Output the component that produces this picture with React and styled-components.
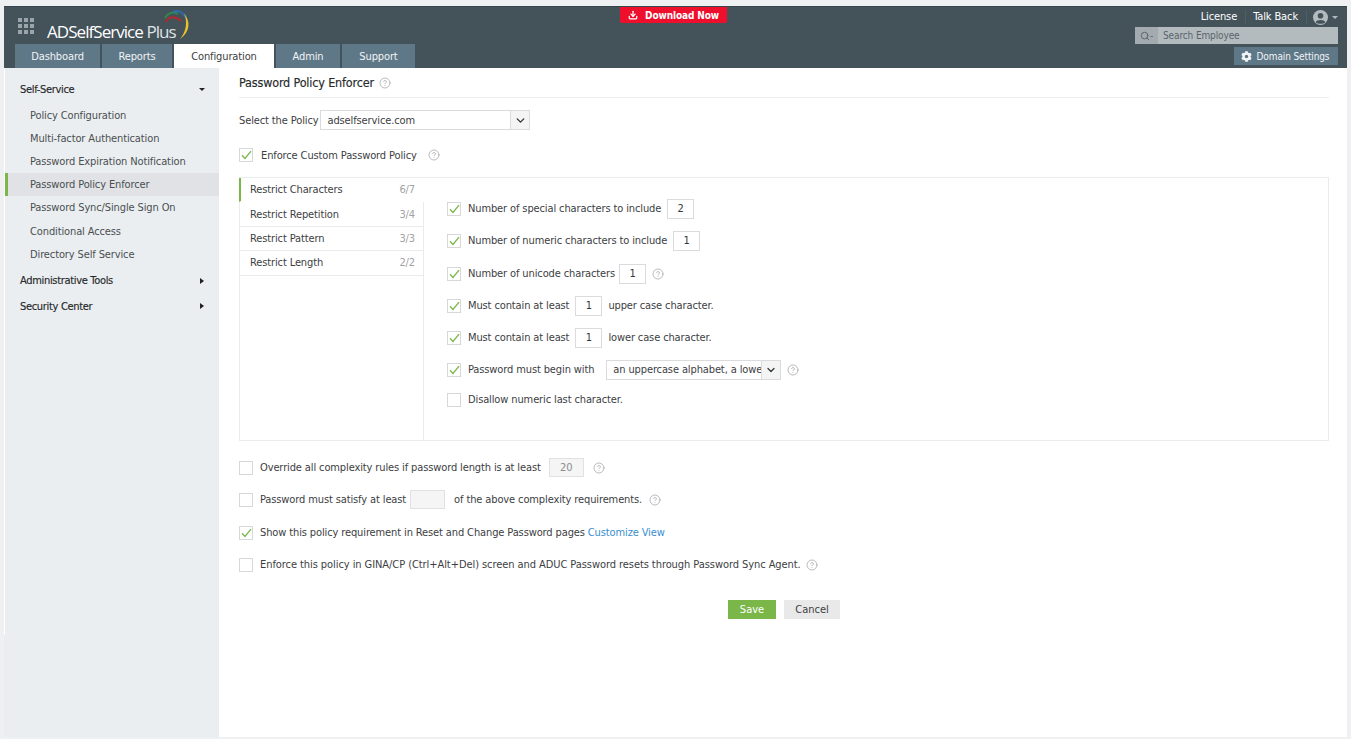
import React from "react";
import styled, { createGlobalStyle } from "styled-components";
import { ChevronDown, Download, CircleHelp, Search } from "lucide-react";
import { FaCog } from "react-icons/fa";

const GlobalStyle = createGlobalStyle`
  html, body {
    margin: 0;
    padding: 0;
    background: #eef0f2;
  }
  body {
    font-family: "DejaVu Sans Condensed", "DejaVu Sans", Tahoma, sans-serif;
    font-stretch: condensed;
    font-size: 11px;
    letter-spacing: -0.12px;
    color: #3c4043;
  }
  * {
    box-sizing: border-box;
  }
`;

const tabs = ["Dashboard", "Reports", "Configuration", "Admin", "Support"];
const tabWidths = [85, 70, 100, 64, 73];

const menu = [
  "Policy Configuration",
  "Multi-factor Authentication",
  "Password Expiration Notification",
  "Password Policy Enforcer",
  "Password Sync/Single Sign On",
  "Conditional Access",
  "Directory Self Service",
];

const sideTabs = [
  ["Restrict Characters", "6/7"],
  ["Restrict Repetition", "3/4"],
  ["Restrict Pattern", "3/3"],
  ["Restrict Length", "2/2"],
];

const Help = ({ left = 0 }) => (
  <HelpIcon $left={left}>
    <CircleHelp size={12} strokeWidth={1.4} />
  </HelpIcon>
);

const Check = ({ checked }) => (
  <CheckBox>
    {checked && (
      <svg width="11" height="10" viewBox="0 0 11 10">
        <path d="M1 5.2 L4 8.4 L10 1.2" fill="none" stroke="#7ab648" strokeWidth="1.3" />
      </svg>
    )}
  </CheckBox>
);

const App = () => {
  return (
    <Frame>
      <GlobalStyle />
      <Shell>
        <Header>
          <HeaderLeft>
            <LogoRow>
              <Dots>
                {Array.from({ length: 9 }).map((_, i) => (
                  <i key={i} />
                ))}
              </Dots>
              <LogoText>
                ADSelfService <span>Plus</span>
              </LogoText>
              <LogoMark width="32" height="34" viewBox="0 0 32 34">
                <path d="M5.5 14 C8 9 14 7 21 13" fill="none" stroke="#b5282e" strokeWidth="2" />
                <path d="M5 10 C8 5 13 3 18 6" fill="none" stroke="#2e8b4f" strokeWidth="2" />
                <path d="M13 4 C17 2 22 3 26 10" fill="none" stroke="#2a6db0" strokeWidth="2" />
                <path d="M24 5 C31 14 30 24 20 31 C26 24 28 14 24 5 Z" fill="#e8c22a" />
              </LogoMark>
            </LogoRow>
            <TabBar>
              {tabs.map((t, i) => (
                <Tab key={t} $active={t === "Configuration"} $width={tabWidths[i]}>
                  {t}
                </Tab>
              ))}
            </TabBar>
          </HeaderLeft>
          <DownloadSlot>
            <DownloadButton>
              <Download size={10} strokeWidth={3} />
              Download Now
            </DownloadButton>
          </DownloadSlot>
          <HeaderRight>
            <TopLinks>
              <TopLink>License</TopLink>
              <TopLink>Talk Back</TopLink>
              <UserIcon>
                <svg width="15" height="15" viewBox="0 0 15 15">
                  <circle cx="7.5" cy="7.5" r="7.5" fill="#b4bbbf" />
                  <circle cx="7.5" cy="5.8" r="2.8" fill="#44525a" />
                  <path d="M2.6 12.2 C4 9.4 11 9.4 12.4 12.2 C10 14.4 5 14.4 2.6 12.2 Z" fill="#44525a" />
                </svg>
                <Caret $color="#b4bbbf" />
              </UserIcon>
            </TopLinks>
            <SearchBox>
              <SearchAddon>
                <Search size={10} strokeWidth={2.4} />
                <span>-</span>
              </SearchAddon>
              <SearchText>Search Employee</SearchText>
            </SearchBox>
            <DomainButton>
              <FaCog size={11} />
              Domain Settings
            </DomainButton>
          </HeaderRight>
        </Header>
        <Body>
          <Sidebar>
            <SideHead>
              Self-Service
              <Caret $color="#222" />
            </SideHead>
            <SideList>
              {menu.map((m) => (
                <SideItem key={m} $active={m === "Password Policy Enforcer"}>
                  {m}
                </SideItem>
              ))}
            </SideList>
            <SideHead>
              Administrative Tools
              <CaretRight />
            </SideHead>
            <SideHead>
              Security Center
              <CaretRight />
            </SideHead>
          </Sidebar>
          <Content>
            <Title>
              Password Policy Enforcer
              <Help left={5} />
            </Title>
            <PolicyRow>
              Select the Policy
              <PolicySelect>
                <span>adselfservice.com</span>
                <SelectArrow>
                  <ChevronDown size={13} strokeWidth={2.6} />
                </SelectArrow>
              </PolicySelect>
            </PolicyRow>
            <EnforceRow>
              <Check checked />
              Enforce Custom Password Policy
              <Help left={3} />
            </EnforceRow>
            <Panel>
              <PanelTabs>
                {sideTabs.map(([name, count], i) => (
                  <PanelTab key={name} $active={i === 0}>
                    {name}
                    <Count>{count}</Count>
                  </PanelTab>
                ))}
              </PanelTabs>
              <Rules>
                <Rule>
                  <Check checked />
                  Number of special characters to include
                  <ValueBox>2</ValueBox>
                </Rule>
                <Rule>
                  <Check checked />
                  Number of numeric characters to include
                  <ValueBox>1</ValueBox>
                </Rule>
                <Rule>
                  <Check checked />
                  Number of unicode characters
                  <ValueBox $left={-2}>1</ValueBox>
                  <Help />
                </Rule>
                <Rule>
                  <Check checked />
                  Must contain at least
                  <ValueBox>1</ValueBox>
                  upper case character.
                </Rule>
                <Rule>
                  <Check checked />
                  Must contain at least
                  <ValueBox>1</ValueBox>
                  lower case character.
                </Rule>
                <Rule $height={30}>
                  <Check checked />
                  Password must begin with
                  <BeginSelect>
                    <span>an uppercase alphabet, a lowercase alphabet</span>
                    <SelectArrow>
                      <ChevronDown size={12} strokeWidth={2.6} />
                    </SelectArrow>
                  </BeginSelect>
                  <Help />
                </Rule>
                <Rule>
                  <Check />
                  Disallow numeric last character.
                </Rule>
              </Rules>
            </Panel>
            <Options>
              <Rule>
                <Check />
                Override all complexity rules if password length is at least
                <DisabledBox $left={2}>20</DisabledBox>
                <Help left={3} />
              </Rule>
              <Rule>
                <Check />
                Password must satisfy at least
                <DisabledBox $left={-2} $right={3} />
                of the above complexity requirements.
                <Help left={1} />
              </Rule>
              <Rule>
                <Check checked />
                Show this policy requirement in Reset and Change Password pages
                <LinkText>Customize View</LinkText>
              </Rule>
              <Rule $tracking={-0.07}>
                <Check />
                Enforce this policy in GINA/CP (Ctrl+Alt+Del) screen and ADUC Password resets through Password Sync Agent.
                <Help left={-1} />
              </Rule>
            </Options>
            <Actions>
              <SaveButton>Save</SaveButton>
              <CancelButton>Cancel</CancelButton>
            </Actions>
          </Content>
        </Body>
      </Shell>
    </Frame>
  );
};

const Frame = styled.div`
  height: 739px;
  padding: 6px 4px 2px;
  overflow: hidden;
`;

const Shell = styled.div`
  height: 100%;
  display: flex;
  flex-direction: column;
  background: #fff;
`;

const Header = styled.header`
  height: 62px;
  flex: none;
  background: #44525a;
  border-top: 1px solid #39454c;
  display: grid;
  grid-template-columns: 1fr auto 1fr;
  padding: 0 9px 0 11px;
`;

const HeaderLeft = styled.div`
  display: flex;
  flex-direction: column;
  justify-content: space-between;
`;

const LogoRow = styled.div`
  position: relative;
  display: flex;
  align-items: flex-start;
  padding: 5px 0 0 3px;
  color: #fff;
`;

const LogoMark = styled.svg`
  position: absolute;
  left: 145px;
  top: 1px;
`;

const Dots = styled.div`
  display: grid;
  grid-template-columns: repeat(3, 4px);
  grid-auto-rows: 4px;
  gap: 2px;
  margin: 6px 13px 0 0;
  i {
    background: #9aa5ab;
  }
`;

const LogoText = styled.div`
  font-family: "Open Sans", sans-serif;
  font-stretch: normal;
  font-size: 17px;
  letter-spacing: -0.95px;
  margin-top: 8px;
  white-space: nowrap;
  span {
    color: #dfe3e5;
  }
`;

const TabBar = styled.nav`
  display: flex;
  gap: 2px;
`;

const Tab = styled.a`
  width: ${(p) => p.$width}px;
  height: 24px;
  display: flex;
  align-items: center;
  justify-content: center;
  background: ${(p) => (p.$active ? "#fff" : "#5f7888")};
  color: ${(p) => (p.$active ? "#3c4043" : "#f2f4f5")};
`;

const DownloadSlot = styled.div`
  padding-right: 6px;
`;

const DownloadButton = styled.a`
  width: 107px;
  height: 16px;
  display: flex;
  align-items: center;
  justify-content: center;
  gap: 7px;
  background: #ee0f2d;
  color: #fff;
  font-size: 10px;
  font-weight: bold;
  border-radius: 0 0 2px 2px;
`;

const HeaderRight = styled.div`
  display: flex;
  flex-direction: column;
  align-items: flex-end;
`;

const TopLinks = styled.div`
  display: flex;
  align-items: center;
  height: 20px;
  color: #fff;
`;

const TopLink = styled.a`
  padding: 0 7.5px;
  border-right: 1px solid #4f5e66;
  line-height: 14px;
`;

const UserIcon = styled.div`
  display: flex;
  align-items: center;
  gap: 4px;
  padding-left: 6.5px;
`;

const SearchBox = styled.div`
  width: 203px;
  height: 17px;
  display: flex;
  background: #b4bbbf;
  color: #59646a;
  font-size: 10px;
`;

const SearchAddon = styled.div`
  width: 23px;
  display: flex;
  align-items: center;
  justify-content: center;
  background: #a3abb0;
  color: #5d686e;
`;

const SearchText = styled.span`
  padding-left: 5px;
  line-height: 17px;
`;

const DomainButton = styled.a`
  width: 104px;
  height: 18px;
  margin-top: 3px;
  display: flex;
  align-items: center;
  justify-content: center;
  gap: 5px;
  padding-right: 2px;
  background: #5f7888;
  color: #f2f4f5;
  font-size: 10px;
`;

const Body = styled.div`
  flex: 1;
  display: flex;
  min-height: 0;
`;

const Sidebar = styled.aside`
  position: relative;
  width: 215px;
  flex: none;
  padding: 9px 0 0 1px;
  background: #ebeef0;
  &::before {
    content: "";
    position: absolute;
    left: 0;
    top: 0;
    width: 1px;
    height: 567px;
    background: #fff;
  }
`;

const SideHead = styled.div`
  height: 25.5px;
  padding: 0 14px 0 15px;
  display: flex;
  align-items: center;
  justify-content: space-between;
  color: #26292b;
  letter-spacing: -0.32px;
  -webkit-text-stroke: 0.15px #26292b;
`;

const SideList = styled.ul`
  list-style: none;
  margin: 1px 0 2px;
  padding: 0;
`;

const SideItem = styled.li`
  height: 23.2px;
  padding-left: 22px;
  display: flex;
  align-items: center;
  color: #4a4f52;
  background: ${(p) => (p.$active ? "#e0e2e5" : "transparent")};
  border-left: 3px solid ${(p) => (p.$active ? "#7ab648" : "transparent")};
`;

const Caret = styled.span`
  width: 0;
  height: 0;
  border-left: 3px solid transparent;
  border-right: 3px solid transparent;
  border-top: 3px solid ${(p) => p.$color};
`;

const CaretRight = styled.span`
  width: 0;
  height: 0;
  margin-right: 1px;
  border-top: 3px solid transparent;
  border-bottom: 3px solid transparent;
  border-left: 4px solid #222;
`;

const Content = styled.main`
  flex: 1;
  padding: 0 18px 0 20px;
`;

const Title = styled.h1`
  margin: 0;
  height: 30px;
  padding-top: 7px;
  border-bottom: 1px solid #eceeef;
  display: flex;
  align-items: flex-start;
  font-size: 12.5px;
  font-weight: normal;
  letter-spacing: -0.17px;
  color: #26292b;
  -webkit-text-stroke: 0.15px #26292b;
`;

const HelpIcon = styled.span`
  display: inline-flex;
  margin-left: ${(p) => p.$left}px;
  color: #9a9ea1;
  -webkit-text-stroke: 0;
  h1 > & {
    margin-top: 2px;
  }
`;

const PolicyRow = styled.div`
  margin-top: 12px;
  height: 20px;
  display: flex;
  align-items: center;
  gap: 2px;
`;

const PolicySelect = styled.div`
  width: 210px;
  height: 20px;
  display: flex;
  align-items: stretch;
  justify-content: space-between;
  border: 1px solid #d9dbdc;
  span {
    padding-left: 6px;
    line-height: 19px;
  }
`;

const SelectArrow = styled.div`
  width: 19px;
  flex: none;
  display: flex;
  align-items: center;
  justify-content: center;
  background: #f4f4f4;
  border-left: 1px solid #d9dbdc;
  color: #33383b;
`;

const EnforceRow = styled.div`
  margin-top: 18px;
  height: 14px;
  display: flex;
  align-items: center;
  gap: 8px;
`;

const CheckBox = styled.span`
  width: 14px;
  height: 14px;
  flex: none;
  display: inline-flex;
  align-items: center;
  justify-content: center;
  border: 1px solid #d5d7d8;
  background: #fff;
`;

const Panel = styled.section`
  margin-top: 15px;
  height: 264px;
  display: flex;
  border: 1px solid #eaebec;
`;

const PanelTabs = styled.div`
  width: 184px;
  flex: none;
  border-right: 1px solid #eaebec;
`;

const PanelTab = styled.div`
  position: relative;
  height: 24.4px;
  margin-left: ${(p) => (p.$active ? "-1px" : "0")};
  margin-right: ${(p) => (p.$active ? "-1px" : "0")};
  padding: 0 ${(p) => (p.$active ? 9 : 8)}px 0 ${(p) => (p.$active ? 9 : 10)}px;
  display: flex;
  align-items: center;
  justify-content: space-between;
  color: #3c4043;
  background: #fff;
  border-left: ${(p) => (p.$active ? "2px solid #7ab648" : "none")};
  border-bottom: 1px solid ${(p) => (p.$active ? "transparent" : "#eaebec")};
`;

const Count = styled.span`
  color: #a0a3a5;
`;

const Rules = styled.div`
  flex: 1;
  padding: 21px 0 0 23px;
`;

const Rule = styled.div`
  height: ${(p) => p.$height || 32.3}px;
  display: flex;
  align-items: flex-start;
  gap: 6px;
  line-height: 20px;
  letter-spacing: ${(p) => p.$tracking ?? -0.12}px;
  & > ${CheckBox} {
    margin: 3px 1px 0 0;
  }
  & > ${HelpIcon} {
    margin-top: 4px;
  }
`;

const ValueBox = styled.span`
  width: 27px;
  height: 20px;
  margin-left: ${(p) => p.$left || 0}px;
  display: inline-flex;
  align-items: center;
  justify-content: center;
  border: 1px solid #d9dbdc;
  color: #33383b;
`;

const BeginSelect = styled.div`
  width: 175px;
  height: 20px;
  margin-left: 6px;
  display: flex;
  border: 1px solid #d9dbdc;
  span {
    flex: 1;
    overflow: hidden;
    white-space: nowrap;
    padding-left: 6px;
    line-height: 18px;
  }
`;

const Options = styled.div`
  margin-top: 17px;
`;

const DisabledBox = styled.span`
  width: 35px;
  height: 19px;
  display: inline-flex;
  align-items: center;
  justify-content: center;
  margin: 0 ${(p) => p.$right || 0}px 0 ${(p) => p.$left || 0}px;
  background: #f5f5f5;
  border: 1px solid #e0e1e2;
  color: #8a8d8f;
`;

const LinkText = styled.a`
  margin-left: -3px;
  color: #3a8ed0;
`;

const Actions = styled.div`
  margin-top: 13px;
  padding-left: 489px;
  display: flex;
  gap: 8px;
`;

const SaveButton = styled.button`
  width: 48px;
  height: 19px;
  padding: 0;
  border: none;
  background: #7ab648;
  color: #fff;
  font: inherit;
`;

const CancelButton = styled.button`
  width: 56px;
  height: 19px;
  padding: 0;
  border: none;
  background: #e9e9e9;
  color: #3c4043;
  font: inherit;
`;

export default App;
